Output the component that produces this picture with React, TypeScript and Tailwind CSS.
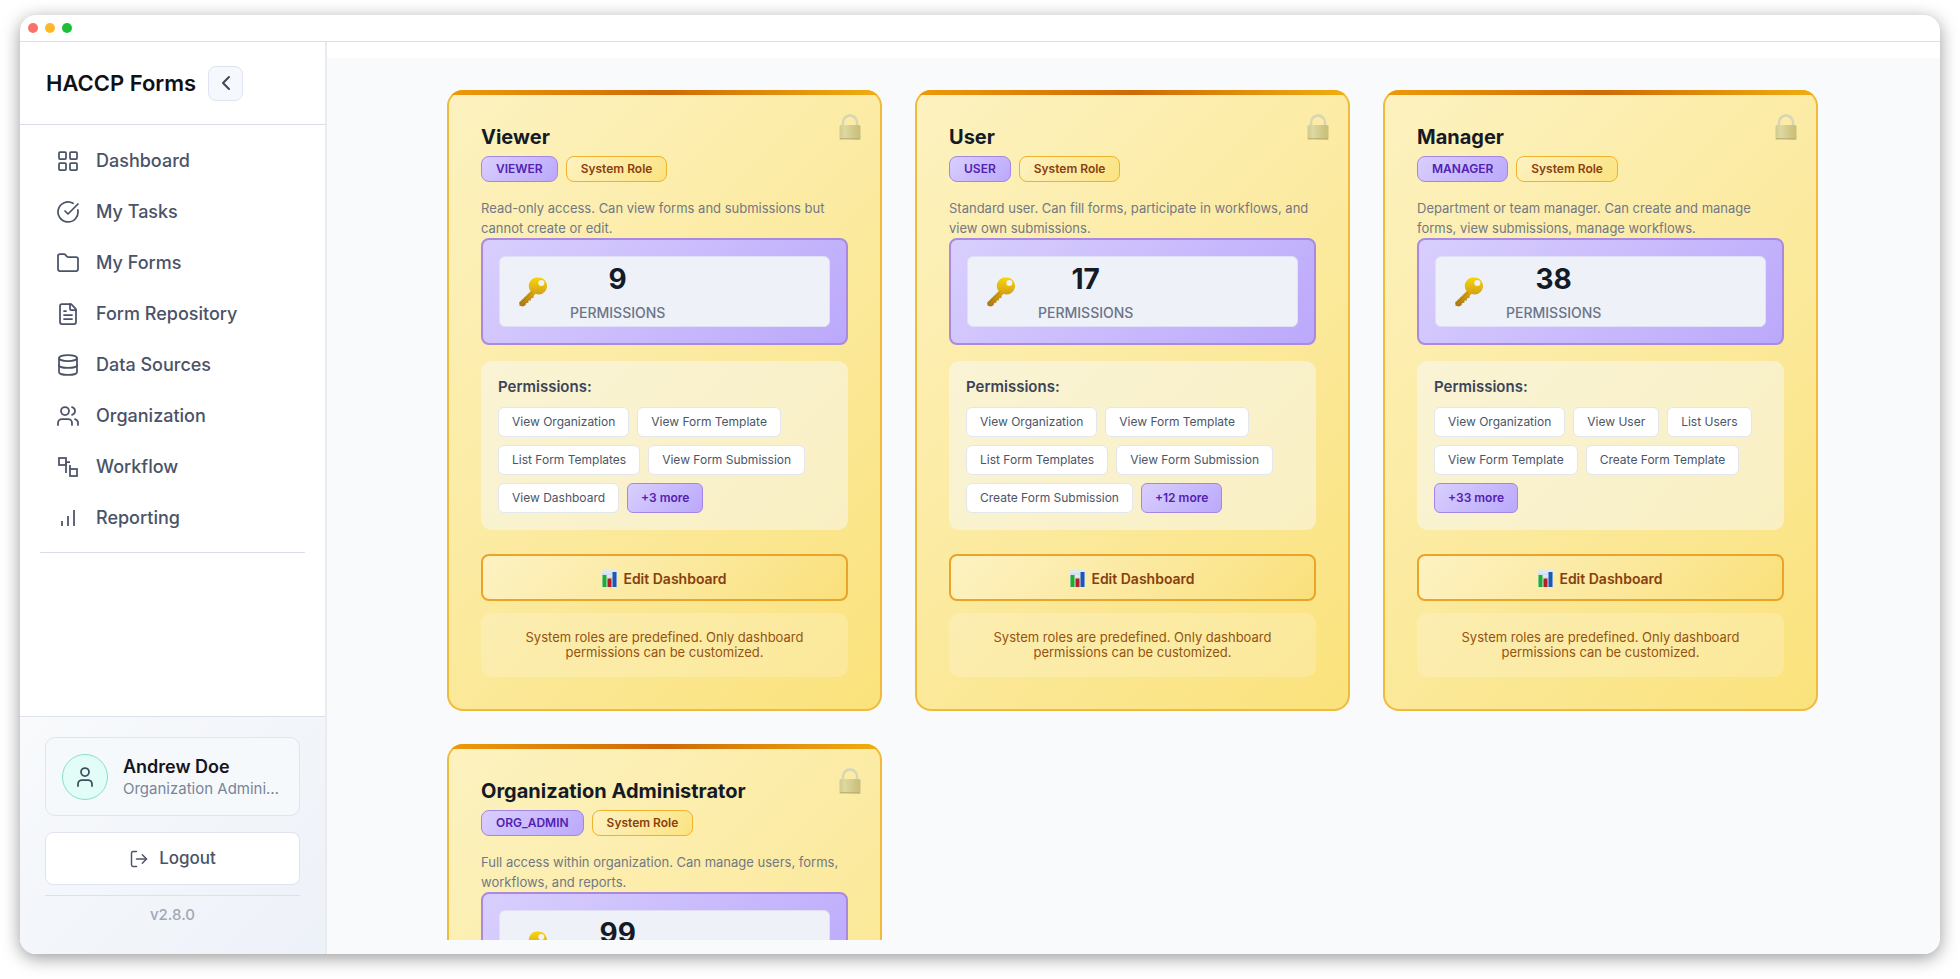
import type { ReactNode } from "react";
import { ChevronLeft, CircleCheckBig, Database, FileText, Folder, LayoutGrid, LogOut, User, Users } from "lucide-react";

interface Role {
  name: string;
  code: string;
  description: string;
  count: number;
  permissions: string[];
  more: number;
}

const ROLES: Role[] = [
  {
    name: "Viewer",
    code: "VIEWER",
    description: "Read-only access. Can view forms and submissions but cannot create or edit.",
    count: 9,
    permissions: ["View Organization", "View Form Template", "List Form Templates", "View Form Submission", "View Dashboard"],
    more: 3,
  },
  {
    name: "User",
    code: "USER",
    description: "Standard user. Can fill forms, participate in workflows, and view own submissions.",
    count: 17,
    permissions: ["View Organization", "View Form Template", "List Form Templates", "View Form Submission", "Create Form Submission"],
    more: 12,
  },
  {
    name: "Manager",
    code: "MANAGER",
    description: "Department or team manager. Can create and manage forms, view submissions, manage workflows.",
    count: 38,
    permissions: ["View Organization", "View User", "List Users", "View Form Template", "Create Form Template"],
    more: 33,
  },
  {
    name: "Organization Administrator",
    code: "ORG_ADMIN",
    description: "Full access within organization. Can manage users, forms, workflows, and reports.",
    count: 99,
    permissions: ["View Organization", "View User", "List Users", "View Form Template", "Create Form Template"],
    more: 94,
  },
];

function WorkflowIcon() {
  return (
    <svg width="24" height="24" viewBox="0 0 24 24" fill="none" stroke="currentColor" strokeWidth="1.75" aria-hidden="true">
      <rect x="3" y="3" width="7" height="7" />
      <rect x="14" y="14" width="7" height="7" />
      <path d="M10 7h4M10 7v11M14 10v4" />
    </svg>
  );
}

function BarsIcon() {
  return (
    <svg width="24" height="24" viewBox="0 0 24 24" fill="none" stroke="currentColor" strokeWidth="1.75" aria-hidden="true">
      <path d="M6 20v-5M12 20v-10M18 20V4" />
    </svg>
  );
}

function LockIcon() {
  return (
    <svg width="22" height="26" viewBox="0 0 22 26" fill="none" aria-hidden="true">
      <defs>
        <linearGradient id="lock-body" x1="0" y1="0" x2="1" y2="0">
          <stop offset="0" stopColor="#d2cb8e" />
          <stop offset="0.25" stopColor="#ded8a2" />
          <stop offset="0.75" stopColor="#cfc582" />
          <stop offset="1" stopColor="#c9be7c" />
        </linearGradient>
      </defs>
      <path d="M4 12V8.500a7 7 0 0 1 14 0V12" stroke="#d6d5b8" strokeWidth="2.500" />
      <rect x="0.500" y="11" width="21" height="15" rx="1.500" fill="url(#lock-body)" />
      <path d="M1 24.500h20" stroke="#bfb478" strokeWidth="1" />
    </svg>
  );
}

function KeyIcon() {
  return (
    <svg width="30" height="30" viewBox="0 0 30 30" fill="none" aria-hidden="true">
      <defs>
        <linearGradient id="key-gold" x1="0" y1="0" x2="0" y2="1">
          <stop offset="0" stopColor="#f6d60a" />
          <stop offset="0.5" stopColor="#dba814" />
          <stop offset="1" stopColor="#a87614" />
        </linearGradient>
      </defs>
      <path
        fillRule="evenodd"
        fill="url(#key-gold)"
        d="M20.700 .600a8.400 8.400 0 1 1-3.200 16.200l-1.900 2-.200 2.200-2.300.300-.300 2.100-2.200.200-.300 2.100-2.100.300-.700 2.300-2.600 1.100-3.300-.600-.500-3.200 11.600-11.500A8.400 8.400 0 0 1 20.700 .600Zm2.600 2.400a3 3 0 1 0 0 6 3 3 0 0 0 0-6Z"
      />
      <path d="m2.500 26.500 12-11.800" stroke="#8f6508" strokeOpacity="0.500" />
    </svg>
  );
}

function ChartIcon() {
  return (
    <svg width="15" height="17" viewBox="0 0 15 17" aria-hidden="true">
      <rect width="15" height="17" fill="#dce9ee" />
      <path d="M0 4h15M0 8h15M0 12h15" stroke="#b9cfdc" strokeWidth="0.500" />
      <rect x="0.500" y="5" width="4" height="12" fill="#1fae2b" />
      <rect x="5.500" y="8.500" width="4" height="8.500" fill="#b81f24" />
      <rect x="10.500" y="2" width="4" height="15" fill="#1d56b3" />
    </svg>
  );
}

const ICON = { size: 24, strokeWidth: 1.75 };

const NAV: { label: string; icon: ReactNode }[] = [
  { label: "Dashboard", icon: <LayoutGrid {...ICON} /> },
  { label: "My Tasks", icon: <CircleCheckBig {...ICON} /> },
  { label: "My Forms", icon: <Folder {...ICON} /> },
  { label: "Form Repository", icon: <FileText {...ICON} /> },
  { label: "Data Sources", icon: <Database {...ICON} /> },
  { label: "Organization", icon: <Users {...ICON} /> },
  { label: "Workflow", icon: <WorkflowIcon /> },
  { label: "Reporting", icon: <BarsIcon /> },
];

function Sidebar() {
  return (
    <aside className="flex w-[307px] shrink-0 flex-col border-r-2 border-[#e9ebf1] bg-white">
      <div className="flex h-[83px] shrink-0 items-center gap-3 border-b border-[#d9dcea] pl-[26px]">
        <h1 className="text-[22px] font-semibold text-[#0f1115]">HACCP Forms</h1>
        <button
          type="button"
          aria-label="Collapse sidebar"
          className="flex size-[35px] items-center justify-center rounded-lg border border-[#dfe4f0] bg-[#f5f9fd] text-[#3f4757]"
        >
          <ChevronLeft size={24} strokeWidth={2} />
        </button>
      </div>

      <nav className="mx-5 border-b border-[#d9dcea] pt-[10px] pb-[9px]">
        {NAV.map((item) => (
          <a key={item.label} href="#" className="flex h-[51px] items-center gap-4 pl-4 text-[18px] font-medium text-[#4a5367]">
            {item.icon}
            {item.label}
          </a>
        ))}
      </nav>

      <div className="mt-auto border-t border-[#dde1ec] bg-linear-135 from-[#f8fafc] to-[#edf1f8] px-[25px] pt-5 pb-[29px]">
        <div className="flex h-[79px] items-center gap-[15px] rounded-[10px] border border-[#dfe4ee] bg-[#f6f9fc] px-4">
          <div className="flex size-[46px] shrink-0 items-center justify-center rounded-full border border-[#86dfc9] bg-[#e2fdf8] text-[#3d4f5c]">
            <User size={24} strokeWidth={1.75} />
          </div>
          <div className="min-w-0 pt-[2px]">
            <div className="text-[18px] leading-[22px] font-semibold text-[#14171f]">Andrew Doe</div>
            <div className="truncate text-[15px] leading-[22px] text-[#7b8498]">Organization Administrator</div>
          </div>
        </div>
        <button
          type="button"
          className="mt-4 flex h-[53px] w-full items-center justify-center gap-[10px] rounded-lg border border-[#dfe3ee] bg-white text-[17px] font-medium text-[#4a5367]"
        >
          <LogOut size={20} strokeWidth={1.75} />
          Logout
        </button>
        <p className="mt-[10px] border-t border-[#dde1ea] pt-[9px] text-center text-[15px] leading-5 font-medium text-[#a0a8b8]">v2.8.0</p>
      </div>
    </aside>
  );
}

function RoleCard({ role }: { role: Role }) {
  return (
    <article className="relative flex overflow-hidden rounded-2xl bg-[#f0bb3c] p-[2px]">
      <div className="absolute inset-x-0 top-0 h-[5px] bg-linear-to-r from-[#ee9a0b] via-[#cf6a06] to-[#f0ae12]" />
      <div className="absolute top-6 right-[21px]">
        <LockIcon />
      </div>

      <div className="flex min-w-0 flex-1 flex-col rounded-[14px] bg-linear-135 from-[#fdf2c0] to-[#fae27b] px-8 pt-[33px] pb-8">
        <h2 className="text-[20px] leading-6 font-bold text-[#141a26]">{role.name}</h2>
        <div className="mt-[7px] flex gap-2">
          <span className="rounded-lg border border-[#a585e6] bg-linear-135 from-[#d9cffd] to-[#bba8fb] px-[14px] text-[12px] leading-6 font-semibold text-[#5221b0]">
            {role.code}
          </span>
          <span className="rounded-lg border border-[#efb22c] bg-linear-135 from-[#fdf2c2] to-[#fbe37f] px-[14px] text-[12px] leading-6 font-semibold text-[#8a400f]">
            System Role
          </span>
        </div>
        <p className="mt-4 text-[13px] leading-5 text-[#727884]">{role.description}</p>

        <div className="rounded-lg border-2 border-[#a98ae0] bg-linear-135 from-[#d9cffd] to-[#bba8fb] p-4">
          <div className="flex h-[71px] items-center gap-[22px] rounded-md border border-[#e0dff6] bg-[#eef2f8] pl-[18px]">
            <KeyIcon />
            <div className="text-center">
              <div className="pt-1 text-[28px] leading-8 font-bold text-[#141a26]">{role.count}</div>
              <div className="mt-[6px] text-[14px] leading-6 font-medium text-[#6b7488]">PERMISSIONS</div>
            </div>
          </div>
        </div>

        <section className="mt-4 rounded-[10px] bg-[#f8fafc]/50 px-[17px] pt-4 pb-[17px]">
          <h3 className="text-[15px] leading-5 font-semibold text-[#3c4557]">Permissions:</h3>
          <ul className="mt-[10px] flex flex-wrap gap-2">
            {role.permissions.map((permission) => (
              <li key={permission} className="rounded-md border border-[#e2e6ee] bg-white px-[13px] text-[12px] leading-7 text-[#4b5567]">
                {permission}
              </li>
            ))}
            <li className="rounded-md border border-[#a585e6] bg-linear-135 from-[#d9cffd] to-[#bba8fb] px-[13px] text-[12px] leading-7 font-semibold text-[#5221b0]">
              +{role.more} more
            </li>
          </ul>
        </section>

        <button
          type="button"
          className="mt-6 flex h-[47px] items-center justify-center gap-[6px] rounded-lg border-2 border-[#eaa42a] bg-linear-135 from-[#fdf2c2] to-[#fae07a] pt-[2px] text-[14px] font-semibold text-[#854010]"
        >
          <ChartIcon />
          Edit Dashboard
        </button>
        <p className="mt-3 rounded-[10px] bg-white/20 px-4 py-[17px] text-center text-[13px] leading-[15px] text-[#96520f]">
          System roles are predefined. Only dashboard permissions can be customized.
        </p>
      </div>
    </article>
  );
}

export default function App() {
  return (
    <div className="h-screen bg-white px-5 pt-[15px] pb-[25px] font-['Inter','Liberation_Sans',sans-serif]">
      <div className="flex h-full flex-col overflow-hidden rounded-2xl bg-white shadow-[0_4px_18px_rgba(0,0,0,0.4)]">
        <div className="flex h-[27px] shrink-0 items-center gap-[7px] border-b border-[#dfe0e3] px-2">
          <span className="size-[10px] rounded-full bg-[#fb7268]" />
          <span className="size-[10px] rounded-full bg-[#fcb92c]" />
          <span className="size-[10px] rounded-full bg-[#1dc035]" />
        </div>

        <div className="flex min-h-0 flex-1">
          <Sidebar />
          <main className="flex min-w-0 flex-1 flex-col bg-[#f8fafc] pb-[14px]">
            <div className="h-4 shrink-0 bg-white" />
            <div className="min-h-0 flex-1 overflow-hidden pt-8 pr-[34px] pl-8">
              <div className="mx-auto grid max-w-[1371px] grid-cols-3 gap-[33px]">
                {ROLES.map((role) => (
                  <RoleCard key={role.code} role={role} />
                ))}
              </div>
            </div>
          </main>
        </div>
      </div>
    </div>
  );
}
